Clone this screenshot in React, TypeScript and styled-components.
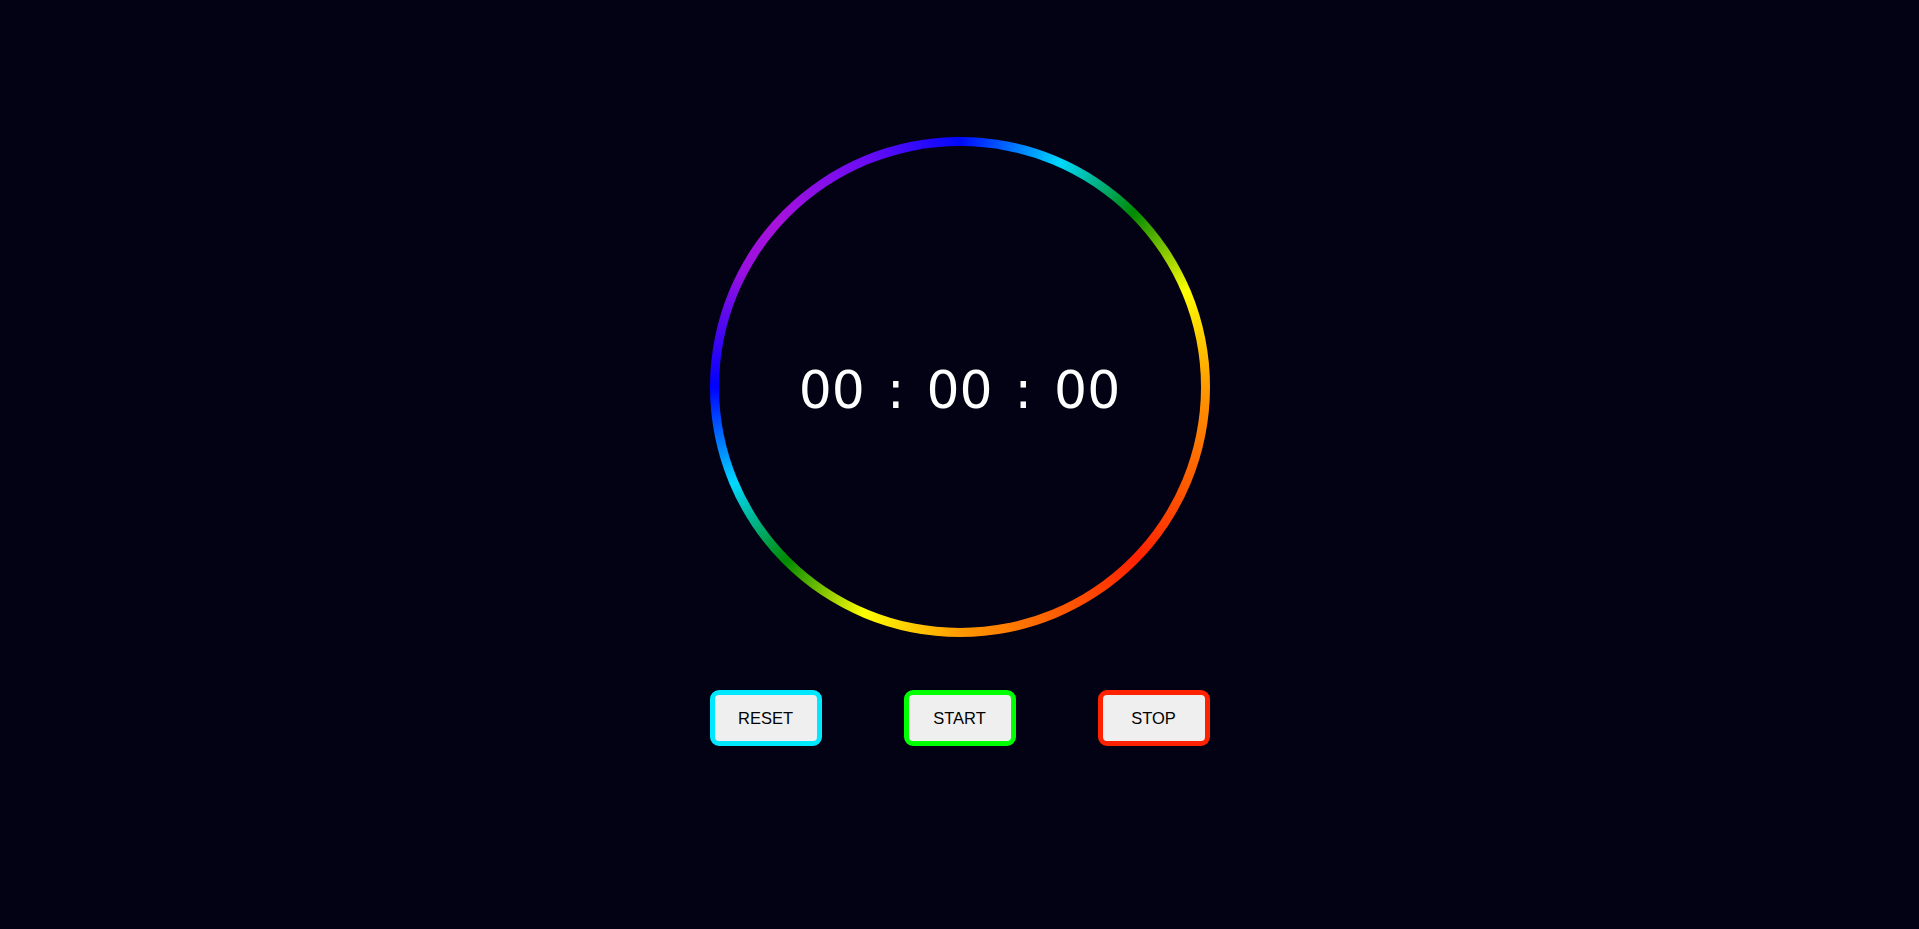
import React from "react";
import styled, { createGlobalStyle } from "styled-components";

const Global = createGlobalStyle`
  html, body {
    margin: 0;
    padding: 0;
    background: #030114;
  }
  body {
    font-family: "Liberation Sans", Arial, sans-serif;
  }
`;

const Page = styled.main`
  min-height: 929px;
  box-sizing: border-box;
  padding-top: 137px;
  display: flex;
  flex-direction: column;
  align-items: center;
  gap: 53px;
`;

const Ring = styled.div`
  width: 500px;
  height: 500px;
  box-sizing: border-box;
  padding: 9px;
  border-radius: 50%;
  background: conic-gradient(
    from 0deg,
    #0008ff 0deg,
    #00d8ff 24deg,
    #008a00 45deg,
    #ffff00 67deg,
    #ff9a00 90deg,
    #ff2200 134deg,
    #ff9a00 180deg,
    #ffff00 203deg,
    #008a00 225deg,
    #00d8ff 247deg,
    #0000ff 270deg,
    #9a10e0 298deg,
    #a812dc 312deg,
    #6a0cf4 338deg,
    #0008ff 360deg
  );
`;

const Face = styled.div`
  width: 100%;
  height: 100%;
  border-radius: 50%;
  background: #030114;
  display: flex;
  align-items: center;
  justify-content: center;
`;

const Time = styled.div`
  display: flex;
  align-items: center;
  gap: 22px;
  padding-top: 5px;
  color: #ffffff;
  font-family: "DejaVu Sans", sans-serif;
  font-size: 52px;
  line-height: 1;
`;

const Unit = styled.span``;

const Sep = styled.span``;

const Controls = styled.div`
  width: 500px;
  display: flex;
  justify-content: space-between;
`;

const Button = styled.button<{ $ring: string }>`
  width: 112px;
  height: 56px;
  box-sizing: border-box;
  border: 5px solid ${(p) => p.$ring};
  border-radius: 9px;
  background: #efefef;
  color: #000;
  font-family: "Liberation Sans", Arial, sans-serif;
  font-size: 16.5px;
  padding: 0;
  cursor: pointer;
`;

export default function App() {
  return (
    <>
      <Global />
      <Page>
        <Ring>
          <Face>
            <Time>
              <Unit>00</Unit>
              <Sep>:</Sep>
              <Unit>00</Unit>
              <Sep>:</Sep>
              <Unit>00</Unit>
            </Time>
          </Face>
        </Ring>
        <Controls>
          <Button $ring="#00e8ff">RESET</Button>
          <Button $ring="#00ff00">START</Button>
          <Button $ring="#ff2200">STOP</Button>
        </Controls>
      </Page>
    </>
  );
}
